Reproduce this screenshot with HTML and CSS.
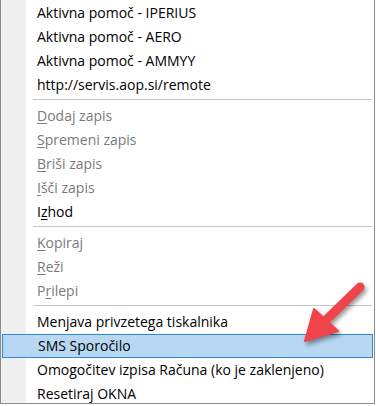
FILE: index.html
```html
<!DOCTYPE html>
<html lang="sl">
<head>
  <meta charset="UTF-8" />
  <title>Meni</title>
  <link rel="stylesheet" href="styles.css">
</head>
<body>

<div class="menu">
  <div class="item">Aktivna pomoč - IPERIUS</div>
  <div class="item">Aktivna pomoč - AERO</div>
  <div class="item">Aktivna pomoč - AMMYY</div>
  <div class="item">http://servis.aop.si/remote</div>
  <div class="sep"></div>
  <div class="item off"><u>D</u>odaj zapis</div>
  <div class="item off"><u>S</u>premeni zapis</div>
  <div class="item off"><u>B</u>riši zapis</div>
  <div class="item off"><u>I</u>šči zapis</div>
  <div class="item">I<u>z</u>hod</div>
  <div class="sep"></div>
  <div class="item off"><u>K</u>opiraj</div>
  <div class="item off"><u>R</u>eži</div>
  <div class="item off">P<u>r</u>ilepi</div>
  <div class="sep"></div>
  <div class="item">Menjava privzetega tiskalnika</div>
  <div class="item active">SMS Sporočilo</div>
  <div class="item">Omogočitev izpisa Računa (ko je zaklenjeno)</div>
  <div class="item">Resetiraj OKNA</div>
</div>

<svg class="arrow" width="376" height="406" viewBox="0 0 376 406">
  <line x1="360" y1="287" x2="327" y2="319" stroke="#f0434a" stroke-width="9" stroke-linecap="round"/>
  <polygon points="314,309 305,341 338,331" fill="#f0434a" stroke="#f0434a" stroke-width="2" stroke-linejoin="round"/>
</svg>

</body>
</html>
```

FILE: styles.css
```css
body { margin: 0; background: #fff; font-family: "Open Sans", "Noto Sans", sans-serif; font-size: 14px; color: #000; }
.menu { width: 375px; height: 404px; overflow: hidden; box-sizing: border-box; border: 1px solid #8c8c8c; border-top: none; padding-top: 1px; background: linear-gradient(to right, #f0f0f0 25px, #fff 25px); }
.item { height: 24px; line-height: 24px; padding-left: 36px; white-space: nowrap; box-sizing: border-box; }
.item u { text-decoration-thickness: 1px; text-underline-offset: 2px; }
.off { color: #7a7a7a; }
.active { background: #b7d7f3; border: 1px solid #2f88d6; line-height: 22px; padding-left: 35px; margin: 0 1px 0 1px; }
.sep { height: 1px; background: #c5c5c5; margin: 2px 2px 4px 32px; }
.arrow { position: absolute; left: 0; top: 0; pointer-events: none; filter: drop-shadow(2px 3px 2px rgba(0,0,0,0.4)); }
```
